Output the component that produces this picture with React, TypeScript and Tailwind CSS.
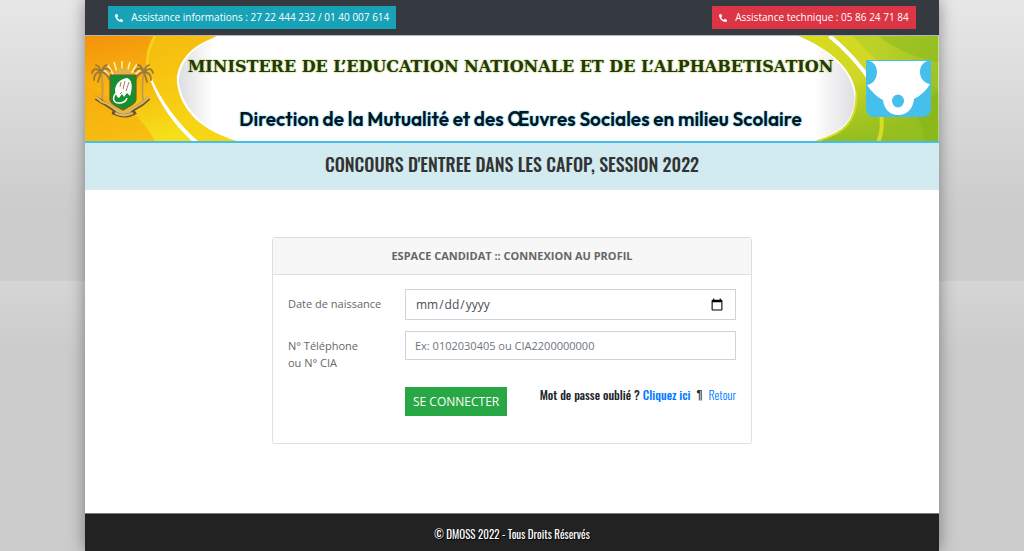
import { FaPhoneAlt } from "react-icons/fa";

const NARROW = "font-['Oswald','Liberation_Sans_Narrow',sans-serif]";
const FIELD =
  "w-full border border-[#ced4da] bg-white px-[9px] text-[#495057] outline-none placeholder:text-[#6c757d] focus:border-[#80bdff]";

function BannerBackground() {
  return (
    <svg className="absolute inset-0 h-full w-full" viewBox="0 0 855 105" preserveAspectRatio="none" aria-hidden="true">
      <defs>
        <linearGradient id="orange" x1="0" y1="0" x2="0.35" y2="1">
          <stop offset="0" stopColor="#f3920a" />
          <stop offset="0.5" stopColor="#f8b50f" />
          <stop offset="1" stopColor="#f5df18" />
        </linearGradient>
        <linearGradient id="green" x1="0" y1="0.2" x2="1" y2="0.6">
          <stop offset="0" stopColor="#dadb1c" />
          <stop offset="0.45" stopColor="#d0d726" />
          <stop offset="1" stopColor="#8dbb1f" />
        </linearGradient>
        <linearGradient id="greenFade" x1="0" y1="0" x2="0" y2="1">
          <stop offset="0.4" stopColor="#9bc022" stopOpacity="0" />
          <stop offset="1" stopColor="#93bd20" />
        </linearGradient>
        <linearGradient id="shadeLeft" x1="0" y1="0" x2="1" y2="0">
          <stop offset="0" stopColor="#dedee2" />
          <stop offset="0.4" stopColor="#ffffff" />
        </linearGradient>
        <linearGradient id="shadeRight" x1="0" y1="0" x2="1" y2="0">
          <stop offset="0.5" stopColor="#ffffff" />
          <stop offset="1" stopColor="#dfdfe2" />
        </linearGradient>
      </defs>
      <rect width="855" height="105" fill="#fff" />
      {/* Left side */}
      <path d="M0 0H136C108 6 91 26 92 46C95 75 118 95 152 105H0Z" fill="url(#orange)" />
      <path d="M0 51C26 58 54 75 70 105H0Z" fill="#f7a60d" opacity="0.55" />
      <path d="M70 0H136C108 6 91 26 92 46C95 75 118 95 152 105H114C80 76 53 42 70 0Z" fill="#f6d012" opacity="0.6" />
      <path d="M70 0C61 16 61 32 67 46" fill="none" stroke="#f6d31a" strokeWidth="3" />
      <path d="M65 43C74 68 89 88 107 105H113C94 88 77 66 67 43Z" fill="#fff" />
      <path d="M132 0C109 10 94 26 94 46C98 74 120 94 154 105H180V0Z" fill="url(#shadeLeft)" />
      {/* Right side */}
      <path d="M715 0H855V105H733C760 98 774 83 773 61C771 34 748 14 715 0Z" fill="url(#green)" />
      <path d="M715 0H855V105H733C760 98 774 83 773 61C771 34 748 14 715 0Z" fill="url(#greenFade)" />
      <path d="M770 0H855V52C820 45 790 26 770 0Z" fill="#a5c92b" opacity="0.45" />
      <path d="M795 0H855V26C832 22 810 12 795 0Z" fill="#8ab820" opacity="0.5" />
      <path d="M832 78C838 88 840 96 841 105H855V55Z" fill="#86b61a" opacity="0.6" />
      <path d="M773 56C774 86 760 98 733 105" fill="none" stroke="#d8dc22" strokeWidth="2" />
      <path d="M690 0V105H730C757 98 772 83 771 61C769 36 747 14 713 0Z" fill="url(#shadeRight)" />
      <path d="M746 0C762 13 776 28 788 46" fill="none" stroke="#fff" strokeWidth="4" />
      <path d="M798 80C799 90 798 98 795 105" fill="none" stroke="#d6dc28" strokeWidth="4" />
    </svg>
  );
}

function CoatOfArms() {
  return (
    <svg width="64" height="58" viewBox="0 0 64 58" role="img" aria-label="Armoiries de Côte d'Ivoire">
      {/* Rising sun */}
      <g stroke="#fdf0b0" strokeWidth="1.6">
        <path d="M31 16V1M27 16L23 2M35 16L39 2M24 17L16 4M38 17L46 4M21 18L11 8M41 18L51 8" />
      </g>
      <path d="M22 17a10 9 0 0 1 20 0Z" fill="#dfb24a" />
      {/* Palm trees */}
      <g fill="none" stroke="#9a7a38" strokeWidth="1.8" strokeLinecap="round">
        <path d="M10 12C12 22 12 31 11 41M53 12C51 22 51 31 52 41" stroke="#c39a4c" />
        <path d="M10 12C5 7 2 9 1 13M10 12C5 12 3 15 3 20M10 12C9 16 8 18 7 22M10 12C13 7 17 8 19 11M10 12C15 13 17 15 18 19M10 12C9 8 8 6 5 5M10 12C12 7 14 5 16 5" />
        <path d="M53 12C58 7 61 9 62 13M53 12C58 12 60 15 60 20M53 12C54 16 55 18 56 22M53 12C50 7 46 8 44 11M53 12C48 13 46 15 45 19M53 12C54 8 55 6 58 5M53 12C51 7 49 5 47 5" />
      </g>
      {/* Shield and elephant */}
      <path d="M19 15H45V40C44 45 38 46 32 50C26 46 20 45 19 40Z" fill="#16902f" stroke="#765e24" strokeWidth="1.2" />
      <path d="M24 31C24 24 29 19 36 18C41 19 42 27 39 36L36 33L33 37L31 34L28 38C25 37 25 33 24 31Z" fill="#fff" />
      <path d="M25 33C21 38 22 43 28 43C32 43 35 41 36 38" fill="none" stroke="#fff" strokeWidth="1.5" />
      <path d="M30 22L29 27M34 21L32 29M38 22L35 31M31 32L29 34" stroke="#b07a4a" strokeWidth="1" />
      {/* Ribbon */}
      <path d="M5 38L11 42L15 44L24 50L23 53C32 57 38 56 43 53L41 50L51 44L58 38" fill="none" stroke="#6e5424" strokeWidth="4" />
      <path d="M5 37L11 42L15 43L24 49C30 54 36 53 41 49L51 43L58 37M24 53C30 56 36 56 42 53" fill="none" stroke="#d9b767" strokeWidth="2.4" />
    </svg>
  );
}

function DmossLogo() {
  return (
    <svg width="65" height="57" viewBox="0 0 65 57" role="img" aria-label="DMOSS">
      <path d="M0 0H65V49A8 8 0 0 1 57 57H8A8 8 0 0 1 0 49Z" fill="#45bfeb" />
      <path d="M3 1H62C51 3 51 22 64 24C60 31 54 36 48 39C47 49 41 55 32 55C24 55 18 49 17 40C11 37 5 31 1 25C14 23 14 3 3 1Z" fill="#fff" />
      <ellipse cx="32" cy="41" rx="6" ry="6.5" fill="#45bfeb" />
    </svg>
  );
}

export default function App() {
  return (
    <div className="min-h-screen bg-[#cbcbcb] bg-[linear-gradient(#e7e7e7,#cbcbcb_215px,#cbcbcb_281px,#d5d5d5_281px,#cbcbcb_355px)] font-['Segoe_UI','Open_Sans',sans-serif] text-[#212529]">
      <div className="mx-auto flex min-h-screen w-10/12 flex-col bg-white shadow-[0_0_15px_rgba(0,0,0,0.4)]">
        {/* Contacts */}
        <div className="flex items-start justify-between border-b border-[#b5b7b9] bg-[#343a40] px-[23px] pt-1.5 pb-1.5 text-[10px] leading-[23px] text-white">
          <div className="flex items-center bg-[#17a2b8] px-[7px]">
            <FaPhoneAlt className="mr-2 size-[8px]" />
            Assistance informations : 27 22 444 232 / 01 40 007 614
          </div>
          <div className="flex items-center bg-[#dc3545] px-[7px]">
            <FaPhoneAlt className="mr-2 size-[8px]" />
            Assistance technique : 05 86 24 71 84
          </div>
        </div>

        {/* Banner */}
        <header className="relative border-b-2 border-[#45bfe8]">
          <BannerBackground />
          <div className="relative flex h-[105px] items-center justify-between pr-2 pl-1.5">
            <CoatOfArms />
            <div className="flex flex-col items-center gap-7 pt-2 whitespace-nowrap">
              <p className="font-['DejaVu_Serif',serif] text-[16px] leading-6 font-bold text-[#26370a] [text-shadow:0_0_2px_#8fb52b]">
                MINISTERE DE L’EDUCATION NATIONALE ET DE L’ALPHABETISATION
              </p>
              <p className="pl-5 font-['Century_Gothic','Outfit','Lato',sans-serif] text-[19px] leading-6 font-semibold text-[#06161f] [text-shadow:0_0_2px_#45bfeb]">
                Direction de la Mutualité et des Œuvres Sociales en milieu Scolaire
              </p>
            </div>
            <DmossLogo />
          </div>
        </header>

        <h1 className={`${NARROW} border-b border-[#d8e8eb] bg-[#d1ebf0] pt-1.5 pb-2.5 text-center text-[18px] leading-[30px] font-medium text-[#333]`}>
          CONCOURS D'ENTREE DANS LES CAFOP, SESSION 2022
        </h1>

        {/* Login */}
        <main className="flex grow justify-center px-4 pt-[47px] pb-[69px]">
          <form className="w-full max-w-[480px] self-start rounded-[3px] border border-[#dfdfdf] text-[11px] text-[#666]" onSubmit={(e) => e.preventDefault()}>
            <h2 className="border-b border-[#dfdfdf] bg-[#f7f7f7] text-center leading-9 font-bold">
              ESPACE CANDIDAT :: CONNEXION AU PROFIL
            </h2>
            <div className="px-[15px] pt-3.5 pb-[27px]">
              <div className="flex">
                <label htmlFor="birth" className="w-[117px] shrink-0 pt-1.5 leading-[17px]">
                  Date de naissance
                </label>
                <input
                  id="birth"
                  type="date"
                  className={`${FIELD} h-[31px] text-[12px] [&::-webkit-calendar-picker-indicator]:size-3.5`}
                />
              </div>
              <div className="mt-[11px] flex">
                <label htmlFor="login" className="w-[117px] shrink-0 pt-1.5 leading-[17px]">
                  N° Téléphone
                  <br />
                  ou N° CIA
                </label>
                <input id="login" type="text" placeholder="Ex: 0102030405 ou CIA2200000000" className={`${FIELD} h-[29px] text-[11px]`} />
              </div>
              <div className="mt-4 flex items-start justify-between pl-[117px] whitespace-nowrap">
                <button type="submit" className="h-[29px] bg-[#28a745] px-2 text-[12px] text-white">
                  SE CONNECTER
                </button>
                <p className={`${NARROW} text-[12px] leading-4 text-[#212529]`}>
                  <span className="font-medium">
                    Mot de passe oublié ?{" "}
                    <a href="#oubli" className="text-[#007bff]">
                      Cliquez ici
                    </a>
                  </span>
                  <span className="mx-1.5">¶</span>
                  <a href="#retour" className="font-light text-[#007bff]">
                    Retour
                  </a>
                </p>
              </div>
            </div>
          </form>
        </main>

        <footer className={`${NARROW} border-t border-[#777] bg-[#222] pt-[11px] pb-2 text-center text-[11px] leading-[18px] text-white [text-shadow:1px_1px_1px_#000]`}>
          © DMOSS 2022 - Tous Droits Réservés
        </footer>
      </div>
    </div>
  );
}
